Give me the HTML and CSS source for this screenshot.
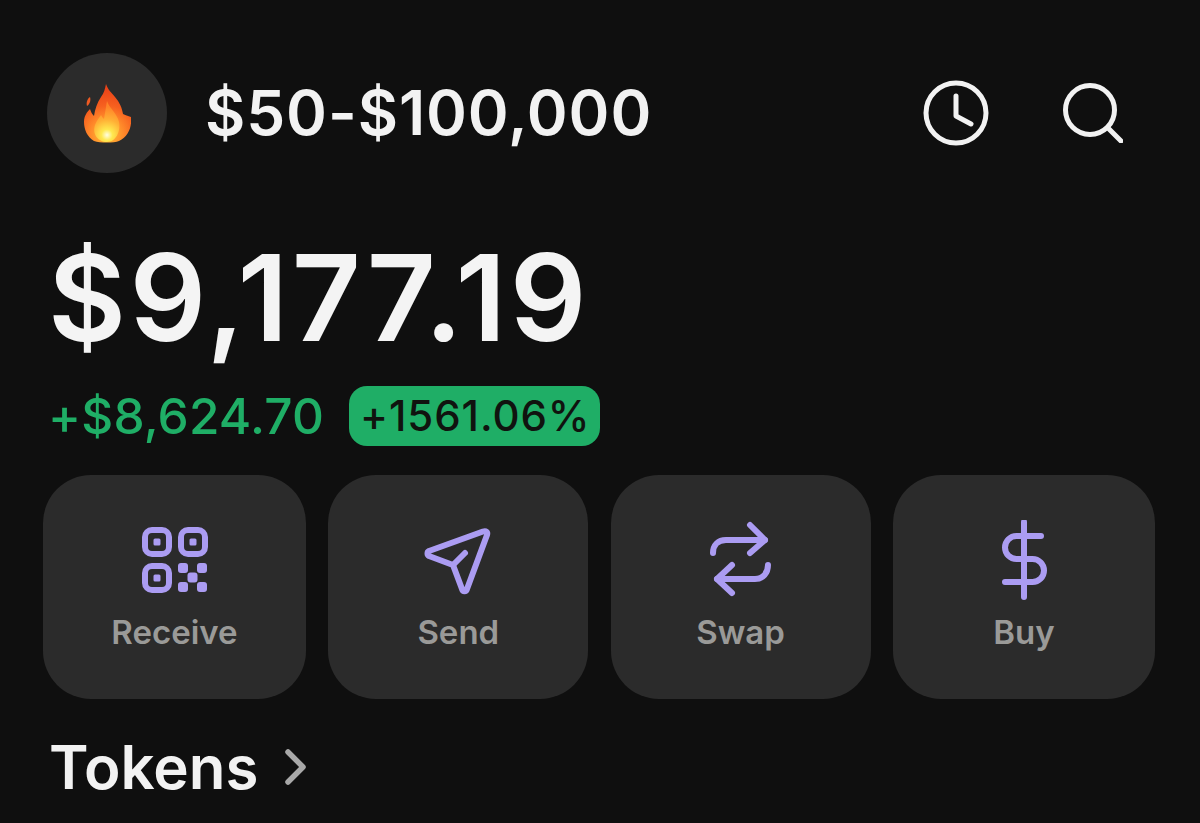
FILE: index.html
```html
<!DOCTYPE html>
<html lang="en">
<head>
<meta charset="utf-8">
<title>Wallet</title>
<link rel="stylesheet" href="styles.css">
</head>
<body>
<main class="screen">
  <header class="top">
    <div class="avatar">
      <svg class="flame" viewBox="0 0 47 59" aria-hidden="true">
        <defs>
          <radialGradient id="fire" gradientUnits="userSpaceOnUse" cx="23" cy="50" r="46">
            <stop offset="0" stop-color="#ffc93a"/>
            <stop offset="0.36" stop-color="#ff8a2a"/>
            <stop offset="0.62" stop-color="#f6601f"/>
            <stop offset="1" stop-color="#ea4218"/>
          </radialGradient>
          <radialGradient id="core" gradientUnits="userSpaceOnUse" cx="23" cy="51" r="28">
            <stop offset="0" stop-color="#fffde2"/>
            <stop offset="0.2" stop-color="#ffe84f"/>
            <stop offset="0.55" stop-color="#ffb035"/>
            <stop offset="1" stop-color="#ff8428"/>
          </radialGradient>
        </defs>
        <path fill="url(#fire)" d="M22 0C24 6 27 8 31 13C36 19 38 24 39 30C41 31 44 32 47 33C48 42 45 52 35 57C30 59 16 59 10 57C3 53 0 45 0 38C0 32 3 28 6 25C7 28 8 30 10 32C11 25 13 19 17 13C20 9 21 5 22 0z"/>
        <path fill="#ee5a22" d="M6 13C7 16 6 20 3 22C2 19 3 15 6 13z"/>
        <path fill="url(#core)" d="M23 17C25 24 33 29 35 38C37 47 32 58 23 58C14 58 8 50 11 41C13 36 15 34 17 31C18 33 19 34 20 35C21 29 22 23 23 17z"/>
      </svg>
    </div>
    <h1 class="wallet-name">$50-$100,000</h1>
    <div class="top-actions">
      <svg class="clock" viewBox="0 0 66 66" aria-hidden="true">
        <circle cx="33" cy="33" r="30"/>
        <path d="M33 16v20l15 8"/>
      </svg>
      <svg class="search" viewBox="0 0 60 60" aria-hidden="true">
        <circle cx="27" cy="27" r="24.500"/>
        <path d="M45 45l13 13"/>
      </svg>
    </div>
  </header>

  <section class="balance">
    <div class="amount">$9,177.19</div>
    <div class="change">
      <span class="change-value">+$8,624.70</span>
      <span class="change-pill">+1561.06%</span>
    </div>
  </section>

  <nav class="actions">
    <button class="action">
      <svg class="icon" viewBox="0 0 80 80" aria-hidden="true">
        <rect x="10" y="10" width="24" height="24" rx="7"/>
        <rect x="46" y="10" width="24" height="24" rx="7"/>
        <rect x="10" y="46" width="24" height="24" rx="7"/>
        <g class="fill">
          <rect x="18.500" y="18.500" width="7" height="7" rx="1.500"/>
          <rect x="54.500" y="18.500" width="7" height="7" rx="1.500"/>
          <rect x="18.500" y="54.500" width="7" height="7" rx="1.500"/>
          <rect x="43" y="43" width="10" height="10" rx="3"/>
          <rect x="62" y="43" width="10" height="10" rx="3"/>
          <rect x="52.500" y="52.500" width="10" height="10" rx="3"/>
          <rect x="43" y="62" width="10" height="10" rx="3"/>
          <rect x="62" y="62" width="10" height="10" rx="3"/>
        </g>
      </svg>
      <span>Receive</span>
    </button>
    <button class="action">
      <svg class="icon" viewBox="0 0 80 80" aria-hidden="true">
        <path d="M65 11.500L11 31C9 32 9 35 11 36L35 45L44 69C45 72 48 72 49 69L69 15C70 12 68 10.500 65 11.500z"/>
        <path d="M35 45L47 33"/>
      </svg>
      <span>Send</span>
    </button>
    <button class="action">
      <svg class="icon" viewBox="0 0 80 80" aria-hidden="true">
        <path d="M12 33C12 25 17 20 25 20H64"/>
        <path d="M49 5L64 20L49 33"/>
        <path d="M67 45C67 53 62 59 54 59H16"/>
        <path d="M31 45L16 59L31 73"/>
      </svg>
      <span>Swap</span>
    </button>
    <button class="action">
      <svg class="icon" viewBox="0 0 80 80" aria-hidden="true">
        <path d="M40 2V77"/>
        <path d="M57 16H32.500a11.500 11.500 0 0 0 0 23H48.500a11.500 11.500 0 0 1 0 23H21"/>
      </svg>
      <span>Buy</span>
    </button>
  </nav>

  <a class="tokens">Tokens
    <svg class="chevron" viewBox="0 0 22 36" aria-hidden="true"><path d="M4 3l15 15L4 33"/></svg>
  </a>
</main>
</body>
</html>
```
FILE: styles.css
```css
* { box-sizing: border-box; }
html, body { margin: 0; height: 100%; }
body {
  background: #0f0f0f;
  color: #f2f2f2;
  font-family: Inter, "Liberation Sans", sans-serif;
  overflow: hidden;
}
.screen {
  width: 1200px;
  height: 823px;
  padding: 53px 45px 0 43px;
  display: flex;
  flex-direction: column;
}
.top {
  display: flex;
  align-items: center;
  padding-left: 4px;
  height: 120px;
}
.avatar {
  width: 120px;
  height: 120px;
  border-radius: 50%;
  background: #2b2b2b;
  display: flex;
  align-items: center;
  justify-content: center;
  flex: none;
}
.flame { width: 47px; height: 59px; }
.wallet-name {
  margin: 0 0 0 38px;
  font-size: 62px;
  font-weight: 600;
  line-height: 1;
  letter-spacing: 0.9px;
}
.top-actions {
  margin-left: auto;
  display: flex;
  align-items: center;
  gap: 74px;
  padding-right: 32px;
}
.clock, .search { fill: none; stroke: #f2f2f2; stroke-linecap: round; stroke-linejoin: round; }
.clock { width: 66px; height: 66px; stroke-width: 5; }
.search { width: 60px; height: 60px; stroke-width: 5; }
.balance { margin-top: 60px; padding-left: 5px; }
.amount {
  font-size: 120px;
  font-weight: 600;
  line-height: 130px;
  letter-spacing: 3.500px;
  color: #f4f4f4;
}
.change {
  display: flex;
  align-items: center;
  gap: 25px;
  margin-top: 23px;
}
.change-value {
  color: #1fae66;
  font-size: 49.500px;
  font-weight: 500;
  line-height: 60px;
  letter-spacing: 0.2px;
}
.change-pill {
  background: #1fae66;
  color: #10130f;
  font-size: 42px;
  font-weight: 500;
  line-height: 60px;
  height: 60px;
  padding: 0 10px 0 11px;
  border-radius: 18px;
  letter-spacing: 0.9px;
}
.actions {
  display: grid;
  grid-template-columns: 263px 260px 260px 262px;
  column-gap: 22.300px;
  margin-top: 29px;
}
.action {
  height: 224px;
  border: 0;
  border-radius: 48px;
  background: #2b2b2b;
  color: #9a9a98;
  font: 600 33px/40px Inter, "Liberation Sans", sans-serif;
  display: flex;
  flex-direction: column;
  align-items: center;
  padding: 45px 0 0;
  gap: 12px;
}
.icon {
  width: 80px;
  height: 80px;
  flex: none;
  fill: none;
  stroke: #ab9cf2;
  stroke-width: 6;
  stroke-linecap: round;
  stroke-linejoin: round;
}
.icon .fill { fill: #ab9cf2; stroke: none; }
.tokens {
  display: flex;
  align-items: center;
  gap: 26px;
  padding-left: 6px;
  margin-top: 32px;
  font-size: 60px;
  font-weight: 600;
  line-height: 72px;
  color: #f2f2f2;
}
.chevron { width: 22px; height: 36px; fill: none; stroke: #a8a8a8; stroke-width: 5.500; stroke-linecap: round; stroke-linejoin: round; }
```
